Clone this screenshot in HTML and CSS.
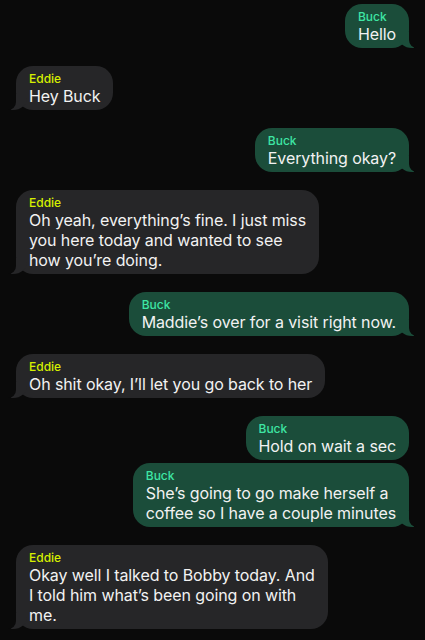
FILE: index.html
```html
<!DOCTYPE html>
<html>
<head>
<meta charset="utf-8">
<link rel="stylesheet" href="styles.css">
</head>
<body>
<div class="chat">
  <div class="row sent"><div class="bubble tail"><div class="name">Buck</div><div class="text">Hello</div></div></div>
  <div class="row recv"><div class="bubble tail"><div class="name">Eddie</div><div class="text">Hey Buck</div></div></div>
  <div class="row sent"><div class="bubble tail"><div class="name">Buck</div><div class="text">Everything okay?</div></div></div>
  <div class="row recv"><div class="bubble tail"><div class="name">Eddie</div><div class="text">Oh yeah, everything’s fine. I just miss<br>you here today and wanted to see<br>how you’re doing.</div></div></div>
  <div class="row sent"><div class="bubble tail"><div class="name">Buck</div><div class="text">Maddie’s over for a visit right now.</div></div></div>
  <div class="row recv"><div class="bubble tail"><div class="name">Eddie</div><div class="text">Oh shit okay, I’ll let you go back to her</div></div></div>
  <div class="row sent"><div class="bubble"><div class="name">Buck</div><div class="text">Hold on wait a sec</div></div></div>
  <div class="row sent cont"><div class="bubble tail"><div class="name">Buck</div><div class="text">She’s going to go make herself a<br>coffee so I have a couple minutes</div></div></div>
  <div class="row recv"><div class="bubble tail"><div class="name">Eddie</div><div class="text">Okay well I talked to Bobby today. And<br>I told him what’s been going on with<br>me.</div></div></div>
</div>
</body>
</html>
```
FILE: styles.css
```css
html, body {
  margin: 0;
  padding: 0;
  background: #0a0a0a;
}
body {
  font-family: "Inter", "Roboto", "Liberation Sans", sans-serif;
  color: #f2f2f2;
}
.chat {
  display: flex;
  flex-direction: column;
  padding: 4px 16px 0 16px;
  gap: 18px;
}
.row {
  display: flex;
}
.row.sent { justify-content: flex-end; }
.row.recv { justify-content: flex-start; }
.row.cont { margin-top: -15px; }
.bubble {
  position: relative;
  border-radius: 17px;
  padding: 6px 13px 4px 13px;
  white-space: nowrap;
}
.sent .bubble { background: #1b4d3a; }
.recv .bubble { background: #262628; }
.name {
  font-size: 12px;
  line-height: 14px;
  font-weight: 500;
}
.sent .name { color: #3ee6a4; }
.recv .name { color: #d6f000; }
.text {
  font-size: 16px;
  line-height: 20px;
  letter-spacing: -0.1px;
}
.bubble.tail::before,
.bubble.tail::after {
  content: "";
  position: absolute;
  bottom: 0;
  height: 16px;
}
.sent .bubble.tail::before {
  right: -5px;
  width: 16px;
  background: #1b4d3a;
  border-bottom-left-radius: 14px 12px;
}
.sent .bubble.tail::after {
  right: -14px;
  width: 14px;
  background: #0a0a0a;
  border-bottom-left-radius: 8px;
}
.recv .bubble.tail::before {
  left: -5px;
  width: 16px;
  background: #262628;
  border-bottom-right-radius: 14px 12px;
}
.recv .bubble.tail::after {
  left: -14px;
  width: 14px;
  background: #0a0a0a;
  border-bottom-right-radius: 8px;
}
```
